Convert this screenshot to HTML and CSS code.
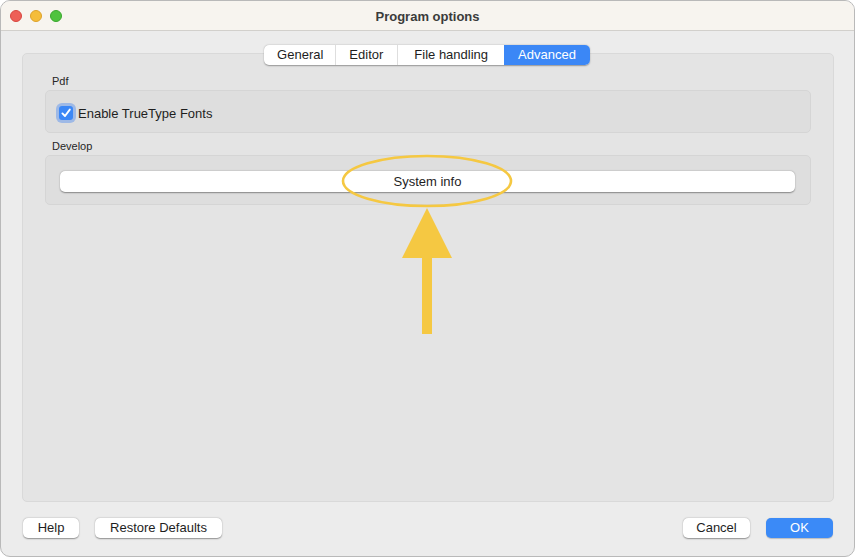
FILE: index.html
```html
<!DOCTYPE html>
<html>
<head>
<meta charset="utf-8">
<link rel="stylesheet" href="styles.css">
</head>
<body>
<div class="window">
  <div class="titlebar">
    <div class="lights">
      <span class="light red"></span>
      <span class="light yellow"></span>
      <span class="light green"></span>
    </div>
    <div class="title">Program options</div>
  </div>
  <div class="content">
    <div class="tabs">
      <div class="tab t-general">General</div>
      <div class="tab t-editor">Editor</div>
      <div class="tab t-file">File handling</div>
      <div class="tab active">Advanced</div>
    </div>
    <div class="panel">
      <div class="group-label">Pdf</div>
      <div class="group group-pdf">
        <label class="check">
          <span class="checkbox">
            <svg viewBox="0 0 14 14" width="14" height="14"><path d="M3.4 7.4 L6 10 L10.8 3.6" fill="none" stroke="#fff" stroke-width="1.9" stroke-linecap="round" stroke-linejoin="round"/></svg>
          </span>
          <span>Enable TrueType Fonts</span>
        </label>
      </div>
      <div class="group-label">Develop</div>
      <div class="group group-dev">
        <button class="btn wide">System info</button>
      </div>
    </div>
    <div class="footer">
      <div class="left">
        <button class="btn help">Help</button>
        <button class="btn restore">Restore Defaults</button>
      </div>
      <div class="right">
        <button class="btn cancel">Cancel</button>
        <button class="btn ok">OK</button>
      </div>
    </div>
  </div>
  <svg class="annotation" width="856" height="559" viewBox="0 0 856 559">
    <ellipse cx="427" cy="181" rx="84" ry="25" fill="none" stroke="#f5c842" stroke-width="2.6"/>
    <polygon points="427,208 452,258 402,258" fill="#f5c842"/>
    <rect x="422" y="257" width="10" height="77" fill="#f5c842"/>
  </svg>
</div>
</body>
</html>
```

FILE: styles.css
```css
* { box-sizing: border-box; }
html, body {
  margin: 0;
  padding: 0;
  background: #ffffff;
}
body {
  width: 856px;
  height: 559px;
  font-family: "Liberation Sans", Arial, sans-serif;
  font-size: 13px;
  color: #1e1e1e;
}
.window {
  position: relative;
  width: 855px;
  height: 557px;
  border: 1px solid #b9b9b9;
  border-radius: 10px;
  overflow: hidden;
  background: #ececec;
  display: flex;
  flex-direction: column;
}
.titlebar {
  height: 30px;
  flex: none;
  background: #f7f4ef;
  border-bottom: 1px solid #d2d0cc;
  position: relative;
  display: flex;
  align-items: center;
  justify-content: center;
}
.lights {
  position: absolute;
  left: 9px;
  top: 9px;
  display: flex;
  gap: 8px;
}
.light {
  width: 12px;
  height: 12px;
  border-radius: 50%;
  display: block;
}
.red { background: #ed5f57; border: 0.5px solid #d8463f; }
.yellow { background: #f5bd3a; border: 0.5px solid #dca12a; }
.green { background: #4fc33f; border: 0.5px solid #3aa72e; }
.title {
  font-weight: bold;
  font-size: 13px;
  color: #3b3b3b;
  margin-top: 1px;
}
.content {
  flex: 1;
  display: flex;
  flex-direction: column;
  padding: 14px 20px 18px 21px;
}
.tabs {
  position: relative;
  z-index: 1;
  align-self: center;
  margin-right: 2px;
  display: flex;
  height: 20px;
  background: #ffffff;
  border-radius: 5px;
  box-shadow: 0 0.5px 1.5px rgba(0,0,0,0.35);
}
.tab {
  padding: 0 12px;
  line-height: 20px;
  border-left: 1px solid #dedede;
  color: #1e1e1e;
}
.tab.t-general { border-left: none; padding-left: 13px; }
.tab.t-editor { padding: 0 14px 0 13px; }
.tab.t-file { padding: 0 16px; }
.tab.active {
  background: #3b87f6;
  color: #ffffff;
  border-left: none;
  border-radius: 0 5px 5px 0;
  padding: 0 14px;
}
.panel {
  flex: 1;
  margin-top: -12px;
  background: #e4e4e4;
  border: 1px solid #d9d9d9;
  border-radius: 5px;
  padding: 20px 22px 0 22px;
}
.group-label {
  font-size: 11px;
  line-height: 14px;
  height: 14px;
  padding-left: 7px;
  margin-bottom: 2px;
  color: #262626;
}
.group {
  background: #dedede;
  border: 1px solid #d5d5d5;
  border-radius: 5px;
}
.group-pdf {
  height: 43px;
  display: flex;
  align-items: center;
  padding-left: 13px;
  padding-top: 3px;
  margin-bottom: 6px;
}
.check {
  display: flex;
  align-items: center;
  gap: 5px;
}
.checkbox {
  width: 14px;
  height: 14px;
  border-radius: 3px;
  background: #3b87f6;
  box-shadow: 0 0 0 3px rgba(80,140,240,0.45);
  display: flex;
  align-items: center;
  justify-content: center;
}
.checkbox svg { display: block; }
.group-dev {
  height: 50px;
  padding: 15px 15px 0 14px;
}
.btn {
  font-family: inherit;
  font-size: 13px;
  color: #1e1e1e;
  background: #ffffff;
  border: none;
  border-radius: 5px;
  box-shadow: 0 0.5px 1.5px rgba(0,0,0,0.4);
  height: 20px;
  padding: 0;
  line-height: 20px;
  display: block;
}
.btn.wide { width: 100%; height: 21px; }
.footer {
  margin-top: 16px;
  display: flex;
  justify-content: space-between;
  padding: 0 1px 0 1px;
}
.left, .right { display: flex; }
.help { width: 56px; }
.restore { width: 127px; margin-left: 16px; }
.cancel { width: 67px; }
.ok {
  width: 67px;
  margin-left: 16px;
  background: #3b8af7;
  color: #ffffff;
  box-shadow: 0 0.5px 1px rgba(0,0,0,0.2);
}
.annotation {
  position: absolute;
  left: -1px;
  top: -1px;
  pointer-events: none;
}
```
